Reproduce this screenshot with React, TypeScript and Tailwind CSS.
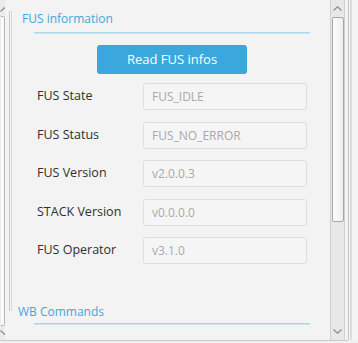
const rows = [
  { label: "FUS State", value: "FUS_IDLE" },
  { label: "FUS Status", value: "FUS_NO_ERROR" },
  { label: "FUS Version", value: "v2.0.0.3" },
  { label: "STACK Version", value: "v0.0.0.0" },
  { label: "FUS Operator", value: "v3.1.0" },
];

const Chevron = ({ up }: { up?: boolean }) => (
  <svg width="9" height="5" viewBox="0 0 9 5" className="block">
    <path
      d={up ? "M0.5 4.5 L4.5 0.8 L8.5 4.5" : "M0.5 0.5 L4.5 4.2 L8.5 0.5"}
      fill="none"
      stroke="#8a8a8a"
      strokeWidth="1.2"
    />
  </svg>
);

const App = () => {
  return (
    <div
      className="w-[358px] h-[343px] bg-[#f3f3f3] flex flex-col overflow-hidden"
      style={{ fontFamily: '"Open Sans", "Noto Sans", sans-serif' }}
    >
      <div className="flex h-[340px]">
        {/* cut-off scrollbar of the panel on the left */}
        <div className="w-[5px] bg-[#ebebeb] flex flex-col items-end">
          <div className="h-[16px] w-full overflow-hidden flex justify-end pt-[7px]">
            <div className="-mr-[4px]">
              <Chevron up />
            </div>
          </div>
          <div className="w-[4px] h-[310px] border-r border-t border-b border-[#b5b5b5] rounded-r-[2px] bg-[#fafafa]" />
          <div className="flex-1 w-full overflow-hidden flex justify-end pt-[4px]">
            <div className="-mr-[4px]">
              <Chevron />
            </div>
          </div>
        </div>

        {/* main panel */}
        <div className="flex-1 pl-[4px] pt-[20px]">
          <div className="h-[300px] border-l border-[#a9d6ea] pl-[1px]">
            <div className="h-full border-l border-[#c7dde7]">
              <div className="pl-[10px] -mt-[9px] text-[12px] leading-[16px] text-[#3ea8dc]">
                FUS information
              </div>
              <div className="ml-[22px] w-[276px] mt-[5px] h-[2px] border-t border-[#a9d6ea] border-b border-b-[#d2e6ef]" />
              <div className="ml-[25px] w-[270px] mt-[11px] flex flex-col">
                <div className="flex justify-center">
                  <button
                    type="button"
                    className="w-[150px] h-[29px] rounded-[3px] bg-[#3aa8dc] text-white text-[13px] leading-[29px]"
                  >
                    Read FUS infos
                  </button>
                </div>
                <div className="mt-[9px] flex flex-col gap-[11.5px]">
                  {rows.map((row) => (
                    <div key={row.label} className="flex items-center h-[27px]">
                      <div className="w-[106px] text-[12.5px] text-[#2f2f2f]">{row.label}</div>
                      <div className="w-[164px] h-[27px] rounded-[3px] border border-[#dedede] bg-[#f5f5f5] pl-[8px] text-[12px] leading-[25px] text-[#a9a9a9]">
                        {row.value}
                      </div>
                    </div>
                  ))}
                </div>
              </div>
              <div className="mt-[40px] pl-[6px] text-[12px] leading-[16px] text-[#3ea8dc]">
                WB Commands
              </div>
              <div className="ml-[22px] w-[276px] mt-[3px] h-[2px] border-t border-[#a9d6ea] border-b border-b-[#d2e6ef]" />
            </div>
          </div>
        </div>

        {/* scrollbar */}
        <div className="w-[15px] border-l border-r border-[#d0d0d0] bg-[#e8e8e8] flex flex-col items-center">
          <div className="h-[17px] pt-[6px]">
            <Chevron up />
          </div>
          <div className="w-[12px] h-[205px] rounded-[2px] border border-[#a6a6a6] bg-gradient-to-r from-[#fdfdfd] to-[#eeeeee]" />
          <div className="flex-1 flex items-end pb-[6px]">
            <Chevron />
          </div>
        </div>

        {/* right edge */}
        <div className="w-[13px] flex">
          <div className="w-[3px]" />
          <div className="w-[1px] bg-[#c4c4c4]" />
          <div className="w-[1px]" />
          <div className="w-[2px] bg-[#dddddd]" />
        </div>
      </div>
      <div className="h-[1px] bg-[#c8c8c8] w-[348px]" />
      <div className="flex-1 bg-[#f0f0f0]" />
    </div>
  );
};

export default App;
